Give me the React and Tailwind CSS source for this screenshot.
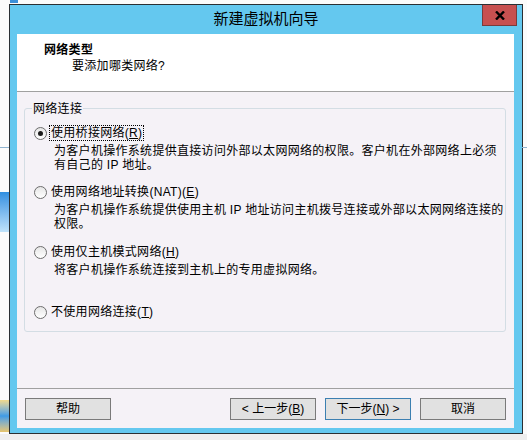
import React from 'react';

const font = { fontFamily: '"Liberation Sans", "Noto Sans CJK SC", sans-serif' };

const Radio = ({ checked }) => (
    <span className="w-[13px] h-[13px] rounded-full border border-[#6d6d6d] bg-gradient-to-b from-[#e6e6e6] to-[#ffffff] flex items-center justify-center shrink-0">
        {checked && <span className="w-[5px] h-[5px] rounded-full bg-[#1b1b1b]" />}
    </span>
);

const Option = ({ checked, focus, label, hotkey, tail, lines, className }) => (
    <div className={className}>
        <div className="h-[16px] flex items-center pl-[9px]">
            <Radio checked={checked} />
            <span className={`ml-[2px] px-[1px] h-[16px] leading-[15px] ${focus ? 'border border-dotted border-black' : 'border border-transparent'}`}>
                {label}(<u>{hotkey}</u>){tail}
            </span>
        </div>
        {lines && (
            <div className="mt-[3px] pl-[29px] leading-[14px] whitespace-nowrap">
                {lines.map((l, i) => <div key={i}>{l}</div>)}
            </div>
        )}
    </div>
);

const Btn = ({ children, primary }) => (
    <button className={`w-[86px] h-[22px] bg-[#e1e1e1] border text-[12px] leading-[20px] text-black ${primary ? 'border-[#3c7fb1]' : 'border-[#7a7a7a]'}`}>
        {children}
    </button>
);

export default function App() {
    return (
        <div className="w-[527px] h-[440px] bg-[#fbfbfb] relative overflow-hidden text-[12px] tracking-[0.3px] text-black" style={font}>
            {/* desktop bits peeking out around the dialog */}
            <div className="absolute left-[10px] top-0 w-[8px] h-[3px] bg-[#3b8fd8]" />
            <div className="absolute left-0 top-[147px] w-[9px] h-px bg-[#8fb3cf]" />
            <div className="absolute right-0 top-[147px] w-[5px] h-px bg-[#8fb3cf]" />
            <div className="absolute left-0 top-[192px] w-[9px] h-[40px] bg-gradient-to-b from-[#2f8fe0] to-[#bfe3fb]" />
            <div className="absolute left-0 top-[400px] w-[9px] h-[32px] bg-gradient-to-b from-[#f2d98a] via-[#3e9be6] to-[#e7c56a]" />
            <div className="absolute left-0 bottom-0 w-full h-[6px] bg-[#eeeeee]" />

            <div className="ml-[9px] mt-[4px] w-[514px] h-[430px] border border-[#2a2f33] bg-[#64c8ef] flex flex-col">
                {/* title bar */}
                <div className="relative h-[29px] shrink-0 flex items-center justify-center">
                    <span className="text-[15px] leading-[20px] -mt-[3px] tracking-normal" style={{ fontFamily: '"Noto Sans CJK SC", sans-serif' }}>新建虚拟机向导</span>
                    <div className="absolute right-[5px] top-0 w-[35px] h-[21px] bg-[#c75050] border border-[#7a3b3b] border-t-0 flex items-center justify-center">
                        <svg width="10" height="9" viewBox="0 0 10 9">
                            <path d="M1 0.5 L9 8.5 M9 0.5 L1 8.5" stroke="#000" strokeWidth="2.4" />
                        </svg>
                    </div>
                </div>

                <div className="flex pl-[7px] pr-[8px] h-[394px]">
                    <div className="flex-1 bg-[#f5f2f7] flex flex-col">
                        {/* header */}
                        <div className="h-[58px] bg-white border-b border-[#a0a0a0] shrink-0 pt-[10px] leading-[13px]">
                            <div className="pl-[27px] font-bold">网络类型</div>
                            <div className="pl-[55px] mt-[3px]">要添加哪类网络?</div>
                        </div>

                        {/* group box */}
                        <div className="mt-[16px] ml-[7px] w-[482px] h-[224px] border border-[#d3dde4] rounded-[3px] shrink-0">
                            <div className="-mt-[8px] h-[16px] leading-[16px] ml-[7px] px-[1px] bg-[#f5f2f7] w-fit">网络连接</div>
                            <Option
                                className="mt-[8px]"
                                checked
                                focus
                                label="使用桥接网络"
                                hotkey="R"
                                lines={['为客户机操作系统提供直接访问外部以太网网络的权限。客户机在外部网络上必须', '有自己的 IP 地址。']}
                            />
                            <Option
                                className="mt-[12px]"
                                label="使用网络地址转换(NAT)"
                                hotkey="E"
                                lines={['为客户机操作系统提供使用主机 IP 地址访问主机拨号连接或外部以太网网络连接的', '权限。']}
                            />
                            <Option
                                className="mt-[13px]"
                                label="使用仅主机模式网络"
                                hotkey="H"
                                lines={['将客户机操作系统连接到主机上的专用虚拟网络。']}
                            />
                            <Option className="mt-[27px]" label="不使用网络连接" hotkey="T" />
                        </div>

                        {/* footer */}
                        <div className="mt-[56px] h-px bg-[#a0a0a0] shrink-0" />
                        <div className="mt-[9px] flex items-center pl-[8px] pr-[8px] tracking-normal">
                            <Btn>帮助</Btn>
                            <div className="flex-1" />
                            <div className="flex gap-[9px]">
                                <Btn>&lt; 上一步(<u>B</u>)</Btn>
                                <Btn primary>下一步(<u>N</u>) &gt;</Btn>
                                <Btn>取消</Btn>
                            </div>
                        </div>
                    </div>
                </div>
            </div>
        </div>
    );
}
